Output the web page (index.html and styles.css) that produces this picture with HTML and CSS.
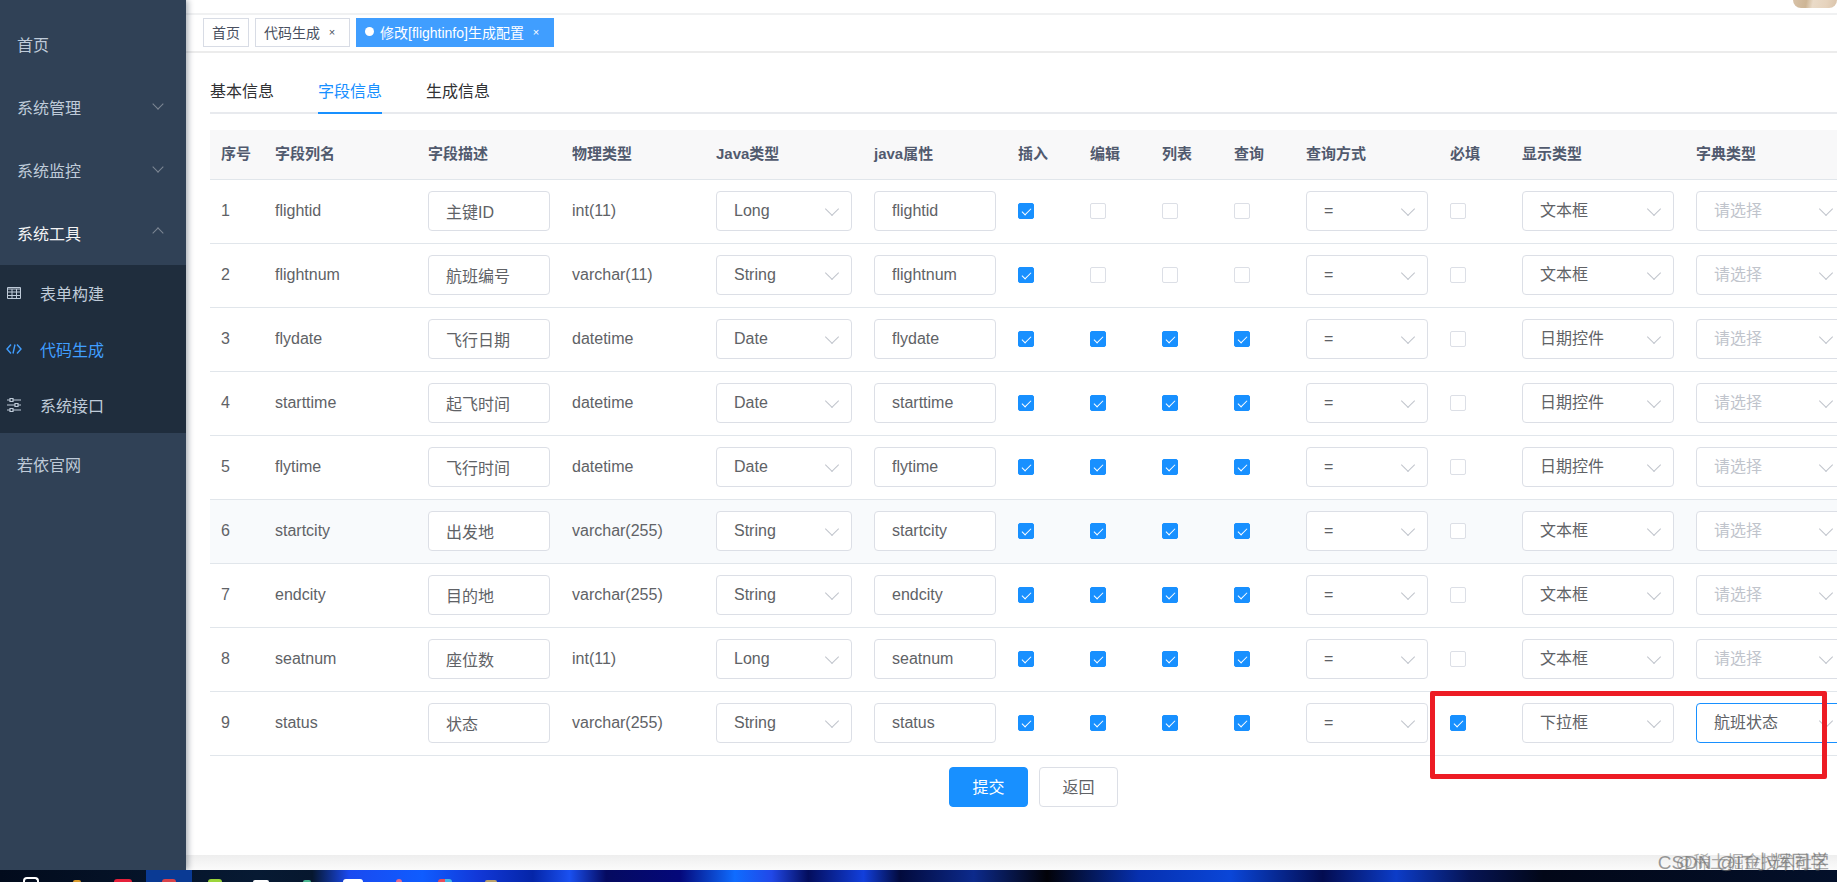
FILE: index.html
```
<!DOCTYPE html>
<html lang="zh-CN">
<head>
    <meta charset="utf-8">
    <title>修改[flightinfo]生成配置</title>
    <link rel="stylesheet" href="styles.css">
</head>
<body>
    <div class="layout">
        <nav class="sidebar">
            <a href="#" class="menu-item">首页</a>
            <a href="#" class="menu-item">系统管理<span class="chevron"></span></a>
            <a href="#" class="menu-item">系统监控<span class="chevron"></span></a>
            <a href="#" class="menu-item opened">系统工具<span class="chevron up"></span></a>
            <div class="submenu">
                <a href="#" class="submenu-item">
                    <svg viewBox="0 0 16 16"><path d="M1.500 2.500h13v11h-13zM1.500 4h13M1.500 7h13M1.500 10.500h13M6 4v9.500M10.500 4v9.500"/></svg>
                    表单构建
                </a>
                <a href="#" class="submenu-item active">
                    <svg viewBox="0 0 16 16"><path stroke-width="1.4" d="M5 3.500L1 8l4 4.500M11 3.500L15 8l-4 4.500M9 3.500L7 12.500"/></svg>
                    代码生成
                </a>
                <a href="#" class="submenu-item">
                    <svg viewBox="0 0 16 16"><path stroke-width="1.200" d="M1 3h3M7 3h8M1 8h8M12 8h3M1 13h3M7 13h8M4 1.500h3v3H4zM9 6.500h3v3H9zM4 11.500h3v3H4z"/></svg>
                    系统接口
                </a>
            </div>
            <a href="#" class="menu-item">若依官网</a>
        </nav>

        <div class="main">
            <header class="navbar"><div class="avatar"></div></header>
            <div class="tags">
                <a href="#" class="tag">首页</a>
                <a href="#" class="tag">代码生成<span class="close">×</span></a>
                <a href="#" class="tag active">修改[flightinfo]生成配置<span class="close">×</span></a>
            </div>

            <div class="content">
                <div class="tabs">
                    <a href="#" class="tab">基本信息</a>
                    <a href="#" class="tab active">字段信息</a>
                    <a href="#" class="tab">生成信息</a>
                </div>

                <form class="gen-form">
                    <table>
                        <colgroup>
                            <col class="w-index"><col class="w-name"><col class="w-input"><col class="w-input">
                            <col class="w-java"><col class="w-input">
                            <col class="w-check"><col class="w-check"><col class="w-check"><col class="w-check">
                            <col class="w-input"><col class="w-check"><col class="w-html"><col>
                        </colgroup>
                        <thead>
                            <tr>
                                <th>序号</th><th>字段列名</th><th>字段描述</th><th>物理类型</th>
                                <th>Java类型</th><th>java属性</th>
                                <th>插入</th><th>编辑</th><th>列表</th><th>查询</th>
                                <th>查询方式</th><th>必填</th><th>显示类型</th><th>字典类型</th>
                            </tr>
                        </thead>
                        <tbody id="rows"></tbody>
                    </table>
                    <div class="mark"></div>
                    <div class="actions">
                        <button type="button" class="btn primary">提交</button>
                        <button type="button" class="btn">返回</button>
                    </div>
                </form>
            </div>

            <footer class="page-end"></footer>
        </div>
    </div>

    <div class="taskbar">
        <span class="app ring"></span>
        <span class="app folder"></span>
        <span class="app red"></span>
        <span class="app current"></span>
        <span class="app green"></span>
        <span class="app white"></span>
        <span class="app teal"></span>
        <span class="app wide"></span>
        <span class="app pink"></span>
        <span class="app multi"></span>
        <span class="app amber"></span>
    </div>
    <div class="watermark site">@稀土掘金技术社区</div>
    <div class="watermark author">CSDN @IT小辉同学</div>

    <script src="app.js"></script>
</body>
</html>
```
FILE: styles.css
```
* {
    box-sizing: border-box;
}

body {
    margin: 0;
    min-height: 100vh;
    display: flex;
    flex-direction: column;
    position: relative;
    overflow: hidden;
    font-family: "Liberation Sans", "Noto Sans CJK SC", sans-serif;
    font-size: 16px;
    color: #606266;
    background: #fff;
}

a {
    text-decoration: none;
    color: inherit;
}

.layout {
    flex: 1;
    display: flex;
}

/* sidebar */
.sidebar {
    width: 186px;
    flex-shrink: 0;
    padding-top: 13px;
    background: #304156;
    color: #bfcbd9;
    box-shadow: 2px 0 6px rgba(0, 21, 41, 0.35);
    z-index: 1;
}

.menu-item {
    height: 63px;
    padding: 0 24px 2px 17px;
    display: flex;
    align-items: center;
    justify-content: space-between;
}

.menu-item.opened {
    color: #f4f4f5;
}

.chevron {
    width: 8px;
    height: 8px;
    margin-bottom: 6px;
    border: solid #7d8794;
    border-width: 0 1px 1px 0;
    transform: rotate(45deg);
}

.chevron.up {
    margin-bottom: 0;
    transform: rotate(225deg);
}

.submenu {
    background: #1f2d3d;
}

.submenu-item {
    height: 56px;
    padding-left: 6px;
    display: flex;
    align-items: center;
    gap: 18px;
}

.submenu-item svg {
    width: 16px;
    height: 16px;
    fill: none;
    stroke: currentColor;
}

.submenu-item.active {
    color: #409eff;
}

/* top bars */
.main {
    flex: 1;
    min-width: 0;
    display: flex;
    flex-direction: column;
    overflow: hidden;
}

.navbar {
    height: 15px;
    display: flex;
    justify-content: flex-end;
    border-bottom: 2px solid #f0f1f2;
}

.avatar {
    width: 44px;
    height: 8px;
    border-radius: 0 0 12px 12px;
    background: linear-gradient(100deg, #d8c2a8 0%, #cdb595 30%, #eadbc8 45%, #e6d3bd 75%, #d9c3aa 100%);
}

.tags {
    height: 38px;
    padding: 3px 17px;
    display: flex;
    gap: 6px;
    border-bottom: 2px solid #ececec;
}

.tag {
    height: 29px;
    padding: 0 8px 2px;
    display: flex;
    align-items: center;
    border: 1px solid #d8dce5;
    color: #495060;
    font-size: 14px;
}

.tag.active {
    background: #409eff;
    border-color: #409eff;
    color: #fff;
}

.tag.active::before {
    content: "";
    width: 9px;
    height: 9px;
    margin-right: 6px;
    border-radius: 50%;
    background: #fff;
}

.close {
    width: 18px;
    margin-left: 3px;
    text-align: center;
    font-size: 11px;
}

/* tabs */
.content {
    flex: 1;
    padding: 17px 0 0 24px;
}

.tabs {
    min-width: 1647px;
    display: flex;
    gap: 44px;
    height: 44px;
    border-bottom: 2px solid #e8eaee;
}

.tab {
    height: 44px;
    line-height: 44px;
    color: #303133;
}

.tab.active {
    color: #1890ff;
    border-bottom: 2px solid #1890ff;
}

/* column table */
.gen-form {
    position: relative;
    min-width: 1647px;
    margin-top: 16px;
}

table {
    width: 100%;
    table-layout: fixed;
    border-collapse: separate;
    border-spacing: 0;
}

.w-index { width: 54px; }
.w-name { width: 153px; }
.w-input { width: 144px; }
.w-java { width: 158px; }
.w-check { width: 72px; }
.w-html { width: 174px; }

th,
td {
    padding: 0 11px 2px;
    text-align: left;
    border-bottom: 1px solid #e1e6eb;
}

th {
    height: 50px;
    padding-bottom: 5px;
    background: #f8f8f9;
    color: #515a6e;
    font-size: 15px;
}

td {
    height: 64px;
}

tr.hover td {
    background: #f8fafc;
}

td input[type="text"],
td select {
    display: block;
    width: 100%;
    height: 40px;
    padding: 0 17px;
    border: 1px solid #dcdfe6;
    border-radius: 4px;
    background: #fff;
    color: #606266;
    font: inherit;
    outline: none;
    appearance: none;
}

.select {
    position: relative;
}

.select::after {
    content: "";
    position: absolute;
    top: 13px;
    right: 15px;
    width: 9px;
    height: 9px;
    border: solid #c0c4cc;
    border-width: 0 1px 1px 0;
    transform: rotate(45deg);
    pointer-events: none;
}

td select.empty {
    color: #c0c4cc;
}

td select.focus {
    border-color: #1890ff;
}

input[type="checkbox"] {
    display: block;
    width: 16px;
    height: 16px;
    margin: 0;
    border: 1px solid #dcdfe6;
    border-radius: 2px;
    background: #fff;
    appearance: none;
}

input[type="checkbox"]:checked {
    position: relative;
    background: #1890ff;
    border-color: #1890ff;
}

input[type="checkbox"]:checked::after {
    content: "";
    position: absolute;
    top: 2px;
    left: 5px;
    width: 4px;
    height: 8px;
    border: solid #fff;
    border-width: 0 1px 1px 0;
    transform: rotate(45deg);
}

/* highlight over the status row */
.mark {
    position: absolute;
    top: 561px;
    left: 1220px;
    width: 397px;
    height: 88px;
    border: 5px solid #ed1c24;
    border-radius: 2px;
}

.actions {
    margin-top: 11px;
    display: flex;
    justify-content: center;
    gap: 11px;
}

.btn {
    width: 79px;
    height: 40px;
    padding: 0 0 2px;
    border: 1px solid #dcdfe6;
    border-radius: 4px;
    background: #fff;
    color: #606266;
    font: inherit;
}

.btn.primary {
    background: #1890ff;
    border-color: #1890ff;
    color: #fff;
}

.page-end {
    height: 15px;
    background: linear-gradient(#eeeeee, #fbfbfb);
}

/* desktop taskbar */
.taskbar {
    position: relative;
    z-index: 2;
    height: 12px;
    padding-left: 8px;
    display: flex;
    align-items: flex-end;
    overflow: hidden;
    background: linear-gradient(90deg, #020b1c 0%, #071a33 14%, #06172e 17%, #1a4af0 19%, #0f5cff 23%, #1238d8 26%, #0425a8 29%, #1a50f0 31%, #050a60 33%, #04087a 37%, #0f6cff 40%, #2148e8 42%, #030d5c 44%, #123fdc 47%, #020a3c 49%, #0c2a8c 53%, #020208 57%, #0630b0 62%, #0a46d8 67%, #030c50 72%, #0c3cc8 76%, #061454 80%, #020718 84%, #03102a 100%);
}

.app {
    width: 46px;
    height: 12px;
    display: flex;
    justify-content: center;
    align-items: flex-end;
}

.app::before {
    content: "";
    width: 14px;
    height: 2px;
    border-radius: 4px 4px 0 0;
    background: #fff;
}

.ring::before { width: 12px; height: 3px; border: 2px solid #fff; border-bottom: 0; background: none; }
.folder::before { width: 8px; background: #d99a2b; }
.red::before { width: 18px; height: 3px; background: #e5203a; }
.current { background: #0a3a94; }
.current::before { background: #d9434a; height: 3px; }
.green::before { height: 3px; background: #9bd53a; }
.white::before { width: 16px; }
.teal::before { width: 8px; background: #48b590; }
.wide::before { width: 20px; height: 3px; }
.pink::before { width: 6px; height: 3px; background: #e86a8c; }
.multi::before { height: 3px; background: linear-gradient(90deg, #e84a5a 50%, #42b8e8 50%); }
.amber::before { width: 12px; background: #b9a06a; }

.watermark {
    position: absolute;
    right: 8px;
    bottom: 5px;
    z-index: 3;
    line-height: 28px;
    white-space: nowrap;
}

.watermark.site {
    font-size: 17px;
    color: rgba(120, 120, 120, 0.6);
}

.watermark.author {
    font-size: 19px;
    color: rgba(110, 110, 110, 0.7);
}
```
FILE: app.js
```
// name, comment, column type, java type, [insert, edit, list, query], required, html type, dict type
const columns = [
    ['flightid', '主键ID', 'int(11)', 'Long', [1, 0, 0, 0], 0, '文本框', ''],
    ['flightnum', '航班编号', 'varchar(11)', 'String', [1, 0, 0, 0], 0, '文本框', ''],
    ['flydate', '飞行日期', 'datetime', 'Date', [1, 1, 1, 1], 0, '日期控件', ''],
    ['starttime', '起飞时间', 'datetime', 'Date', [1, 1, 1, 1], 0, '日期控件', ''],
    ['flytime', '飞行时间', 'datetime', 'Date', [1, 1, 1, 1], 0, '日期控件', ''],
    ['startcity', '出发地', 'varchar(255)', 'String', [1, 1, 1, 1], 0, '文本框', ''],
    ['endcity', '目的地', 'varchar(255)', 'String', [1, 1, 1, 1], 0, '文本框', ''],
    ['seatnum', '座位数', 'int(11)', 'Long', [1, 1, 1, 1], 0, '文本框', ''],
    ['status', '状态', 'varchar(255)', 'String', [1, 1, 1, 1], 1, '下拉框', '航班状态']
];

function textBox(value, label) {
    return `<td><input type="text" value="${value}" aria-label="${label}"></td>`;
}

function checkBox(on, label) {
    return `<td><input type="checkbox" aria-label="${label}"${on ? ' checked' : ''}></td>`;
}

function dropDown(value, label, cls = '') {
    return `<td><div class="select"><select class="${cls}" aria-label="${label}"><option>${value}</option></select></div></td>`;
}

const checkLabels = ['插入', '编辑', '列表', '查询'];

document.getElementById('rows').innerHTML = columns.map((col, i) => {
    const [name, comment, type, javaType, flags, required, htmlType, dictType] = col;
    return `<tr class="${name === 'startcity' ? 'hover' : ''}">
        <td>${i + 1}</td>
        <td>${name}</td>
        ${textBox(comment, '字段描述')}
        <td>${type}</td>
        ${dropDown(javaType, 'Java类型')}
        ${textBox(name, 'java属性')}
        ${flags.map((on, n) => checkBox(on, checkLabels[n])).join('')}
        ${dropDown('=', '查询方式')}
        ${checkBox(required, '必填')}
        ${dropDown(htmlType, '显示类型')}
        ${dropDown(dictType || '请选择', '字典类型', dictType ? 'focus' : 'empty')}
    </tr>`;
}).join('');
```
